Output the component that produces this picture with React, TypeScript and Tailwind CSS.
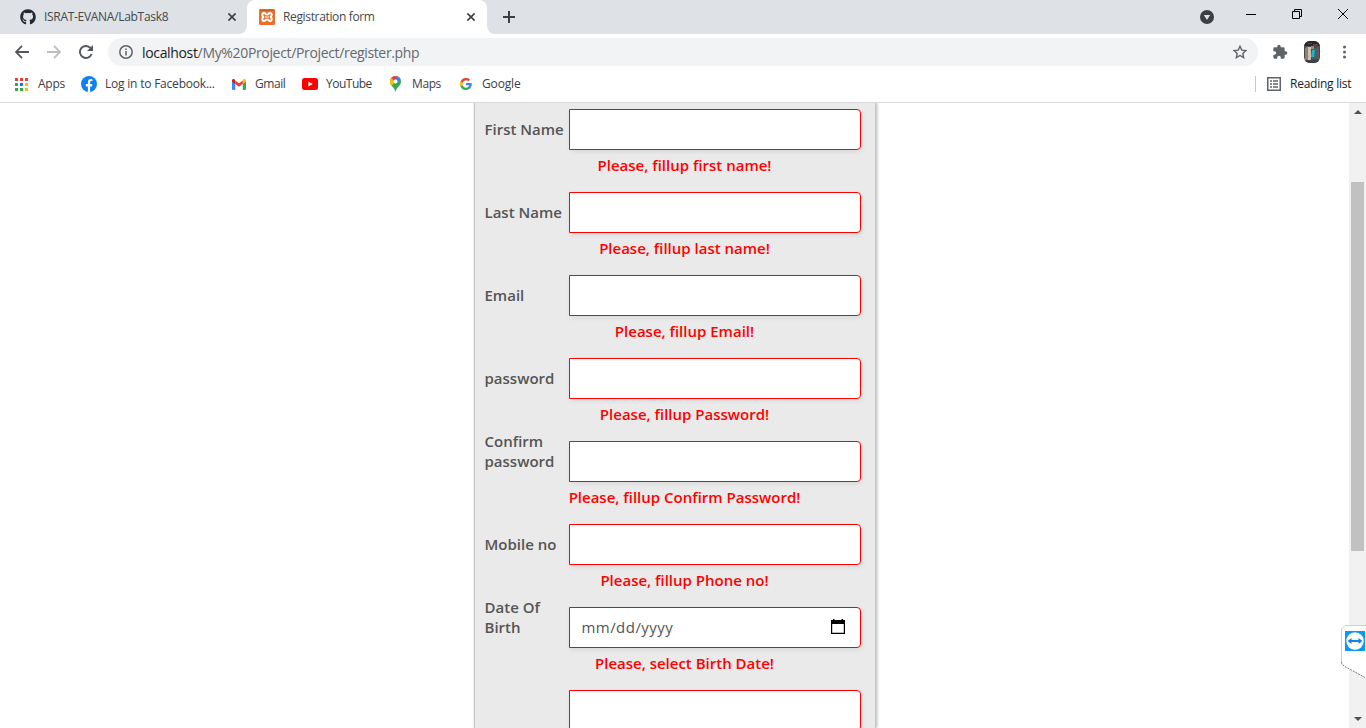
import React from 'react';
import { FaGithub } from 'react-icons/fa';

const ui = "font-['Open_Sans',sans-serif]";

const fields = [
  { label: 'First Name', error: 'Please, fillup first name!' },
  { label: 'Last Name', error: 'Please, fillup last name!' },
  { label: 'Email', error: 'Please, fillup Email!' },
  { label: 'password', error: 'Please, fillup Password!' },
  { label: 'Confirm password', error: 'Please, fillup Confirm Password!' },
  { label: 'Mobile no', error: 'Please, fillup Phone no!' },
  { label: 'Date Of Birth', error: 'Please, select Birth Date!', date: true },
  { label: '', error: '' },
];

function Close({ className = '' }: { className?: string }) {
  return (
    <svg className={className} width="8" height="8" viewBox="0 0 8 8" stroke="#3c4043" strokeWidth="1.6">
      <path d="M.4.4 7.6 7.6M7.6.4.4 7.6" />
    </svg>
  );
}

function TabStrip() {
  return (
    <div className="flex h-[34px] bg-[#dee1e6] text-[12px] text-[#45494d]">
      <div className="flex w-[247px] items-center pl-5">
        <FaGithub size={16} color="#24292f" />
        <span className="ml-2 w-[184px] whitespace-nowrap tracking-[-0.3px]">ISRAT-EVANA/LabTask8</span>
        <Close />
      </div>
      <div className="relative flex w-[240px] items-center rounded-t-[8px] bg-white pl-3">
        <svg className="absolute bottom-0 -left-2" width="8" height="8" viewBox="0 0 8 8" fill="#fff"><path d="M8 0v8H0a8 8 0 0 0 8-8" /></svg>
        <svg className="absolute -right-2 bottom-0" width="8" height="8" viewBox="0 0 8 8" fill="#fff"><path d="M0 0v8h8a8 8 0 0 1-8-8" /></svg>
        <svg width="16" height="16" viewBox="0 0 16 16">
          <rect width="16" height="16" rx="1.5" fill="#e8702a" />
          <path d="M.5 1.2h15" stroke="#c65a1c" />
          <path d="M5 4C3 4 2.700 6.600 4.300 8c-1.600 1.400-1.300 4 .7 4 1.700 0 1.400-1.600 3-1.600S9.300 12 11 12c2 0 2.300-2.600.7-4 1.600-1.400 1.300-4-.7-4-1.700 0-1.400 1.600-3 1.600S6.700 4 5 4z" fill="none" stroke="#fff" strokeWidth="2" strokeLinejoin="round" />
          <path d="M6 8h4" stroke="#fff" strokeWidth="1" />
        </svg>
        <span className="ml-2 w-[184px] whitespace-nowrap tracking-[-0.35px]">Registration form</span>
        <Close />
      </div>
      <svg className="mt-[11px] ml-4" width="12" height="12" viewBox="0 0 12 12" stroke="#3c4043" strokeWidth="2"><path d="M6 0v12M0 6h12" /></svg>
      <div className="ml-auto flex">
        <svg className="mt-[10px]" width="14" height="14" viewBox="0 0 14 14"><circle cx="7" cy="7" r="7" fill="#3c4043" /><path d="M3.800 5h6.400L7 10z" fill="#dee1e6" /></svg>
        <svg className="mt-[14px] ml-8" width="10" height="1" viewBox="0 0 10 1"><path d="M0 0h10v1H0z" /></svg>
        <svg className="mt-[9px] ml-9" width="10" height="10" viewBox="0 0 10 10" fill="none" stroke="#000"><path d="M.5 2.500h7v7h-7zM2.500 2.500v-2h7v7h-2" /></svg>
        <svg className="mt-[9px] mr-[18px] ml-9" width="10" height="10" viewBox="0 0 10 10" stroke="#000"><path d="m0 0 10 10M10 0 0 10" /></svg>
      </div>
    </div>
  );
}

function Toolbar() {
  return (
    <div className="flex h-[34px] items-center pt-[2px] pl-[15px]">
      <svg width="14" height="14" viewBox="0 0 14 14" fill="none" stroke="#54585c" strokeWidth="1.8"><path d="M14 7H1.300M7 .8.900 7 7 13.200" /></svg>
      <svg className="ml-[18px]" width="14" height="14" viewBox="0 0 14 14" fill="none" stroke="#bbbdc0" strokeWidth="1.8"><path d="M0 7h12.700M7 .8 13.100 7 7 13.200" /></svg>
      <svg className="ml-[18px]" width="14" height="14" viewBox="0 0 14 14" fill="none"><path d="M12.600 9A6 6 0 1 1 11.400 2.900L12.500 4" stroke="#54585c" strokeWidth="1.900" /><path d="M14 0v6H8z" fill="#54585c" /></svg>
      <div className="ml-[15px] flex h-7 w-[1150px] items-center rounded-full bg-[#f1f3f4] pr-[11px] pl-[11px]">
        <svg width="14" height="14" viewBox="0 0 14 14" fill="none" stroke="#5f6368" strokeWidth="1.500"><circle cx="7" cy="7" r="6.200" /><path d="M7 6v4.500M7 3.400V5" /></svg>
        <span className="ml-[9px] text-[14px] tracking-[-0.34px] text-[#66696d]"><span className="text-[#202124]">localhost</span>/My%20Project/Project/register.php</span>
        <svg className="ml-auto" width="14" height="14" viewBox="0 0 14 14" fill="none" stroke="#5f6368" strokeWidth="1.400"><path d="m7 1.300 1.750 3.800 4.150.48-3.080 2.840.82 4.100L7 10.450l-3.640 2.070.82-4.100L1.100 5.580l4.150-.48z" /></svg>
      </div>
      <svg className="ml-[14px]" width="16" height="16" viewBox="0 0 24 24" fill="#5f6368"><path d="M20.500 11H19V7a2 2 0 0 0-2-2h-4V3.500a2.500 2.500 0 0 0-5 0V5H4a2 2 0 0 0-2 2v3.800h1.500a2.700 2.700 0 0 1 0 5.400H2V20a2 2 0 0 0 2 2h3.800v-1.500a2.700 2.700 0 0 1 5.400 0V22H17a2 2 0 0 0 2-2v-4h1.500a2.500 2.500 0 0 0 0-5" /></svg>
      <svg className="ml-4 rounded-[6px]" width="16" height="22" viewBox="0 0 16 22">
        <rect width="16" height="22" fill="#4b4648" /><path d="M0 0h16v5H0z" fill="#2a242b" /><path d="M4 2h4v1H4zM9 3h5v2H9z" fill="#70384d" />
        <path d="M1 7l3-2v14H1z" fill="#8b8178" /><path d="M4 6h3v13H4z" fill="#d0c0ab" /><path d="M8 7h5v11H8z" fill="#45606a" /><path d="M8 9h3l-1 7H7z" fill="#1bb5c7" /><path d="M7 5h3v3H7z" fill="#a98372" /><path d="M13 6h2v12h-2z" fill="#65584d" /><path d="M0 19h16v3H0z" fill="#3b424c" />
      </svg>
      <svg className="ml-[23px]" width="4" height="14" viewBox="0 0 4 14" fill="#5f6368"><circle cx="1.500" cy="2" r="1.500" /><circle cx="1.500" cy="7" r="1.500" /><circle cx="1.500" cy="12" r="1.500" /></svg>
    </div>
  );
}

function Bookmarks() {
  return (
    <div className="flex h-[34px] items-center pb-[2px] pl-[15px] text-[12px] whitespace-nowrap text-[#3c4043]">
      <svg width="13" height="13" viewBox="0 0 13 13">
        <path d="M0 0h3v3H0zM5 0h3v3H5zM10 0h3v3h-3z" fill="#ea4335" /><path d="M0 5h3v3H0zM0 10h3v3H0zM5 10h3v3H5z" fill="#34a853" /><path d="M5 5h3v3H5z" fill="#1a73e8" /><path d="M10 5h3v3h-3zM10 10h3v3h-3z" fill="#fbbc04" />
      </svg>
      <span className="ml-[10px] w-[27px] tracking-[-0.25px]">Apps</span>
      <svg className="ml-4" width="16" height="16" viewBox="0 0 16 16"><circle cx="8" cy="8" r="8" fill="#0d80f2" /><path d="M6.900 16v-5.500H4.800V8h2.100V6.300c0-2.200 1.200-3.200 3-3.200.8 0 1.500.1 1.500.1v1.900h-.9c-1.100 0-1.400.7-1.400 1.300V8h2.200l-.4 2.500H9.100V16z" fill="#fff" /></svg>
      <span className="ml-2 w-[110px] tracking-[-0.21px]">Log in to Facebook...</span>
      <svg className="ml-[17px]" width="14" height="11" viewBox="0 0 14 11">
        <path d="M0 2v8a1 1 0 0 0 1 1h2.200V4z" fill="#4285f4" /><path d="M14 2v8a1 1 0 0 1-1 1h-2.200V4z" fill="#34a853" /><path d="M10.800 1.400V5L14 2.700V1.500C14 .2 12.500-.5 11.500.3z" fill="#fbbc04" /><path d="M3.200 1.400V5L7 7.800 10.800 5V1.400L7 4.200z" fill="#ea4335" /><path d="M0 1.500v1.200L3.200 5V1.400L2.500.3C1.500-.5 0 .2 0 1.500" fill="#c5221f" />
      </svg>
      <span className="ml-[9px] w-[31px] tracking-[-0.45px]">Gmail</span>
      <svg className="ml-4" width="16" height="12" viewBox="0 0 16 12"><rect width="16" height="12" rx="2.500" fill="#f00" /><path d="m6.400 3.500 4.300 2.500-4.300 2.500z" fill="#fff" /></svg>
      <span className="ml-2 w-[46px] tracking-[-0.5px]">YouTube</span>
      <svg className="ml-[18px]" width="11" height="16" viewBox="0 0 11 16">
        <path d="M5.500 0A5.500 5.500 0 0 0 0 5.500c0 4.300 4.400 5.500 5.500 10.500C6.600 11 11 9.800 11 5.500A5.500 5.500 0 0 0 5.500 0" fill="#34a853" />
        <path d="M1.300 2 5.500 5.500l-4 4.500C.6 8.900 0 7.700 0 5.500 0 4 .5 2.900 1.300 2" fill="#fbbc04" /><path d="M1.300 2 4 4.200 7.300.3C4.700-.6 2.600.5 1.300 2" fill="#ea4335" /><path d="M7.300.3 4 4.200 7 7.100l3.500-4C9.900 1.700 8.700.7 7.300.3" fill="#4285f4" /><circle cx="5.500" cy="5.500" r="2" fill="#fff" />
      </svg>
      <span className="ml-[11px] w-[29px] tracking-[-0.4px]">Maps</span>
      <svg className="ml-[19px]" width="12" height="12" viewBox="0 0 24 24">
        <path d="M23.500 12.300c0-.9-.1-1.500-.2-2.300H12v4.500h6.500c-.3 1.500-1.200 2.700-2.500 3.600v3h4c2.200-2.100 3.500-5.100 3.500-8.800" fill="#4285f4" /><path d="M12 24c3.200 0 6-1.100 8-2.900l-4-3c-1 .7-2.300 1.200-4 1.200-3.100 0-5.700-2.100-6.700-4.900H1.200v3.100A12 12 0 0 0 12 24" fill="#34a853" /><path d="M5.300 14.400a7 7 0 0 1 0-4.700V6.600H1.200a12 12 0 0 0 0 10.900z" fill="#fbbc05" /><path d="M12 4.700c1.800 0 3.300.6 4.600 1.800L20 3A12 12 0 0 0 1.200 6.600l4.100 3.100A7.200 7.200 0 0 1 12 4.700" fill="#ea4335" />
      </svg>
      <span className="ml-[10px] tracking-[-0.15px]">Google</span>
      <span className="mr-[11px] ml-auto h-4 w-px bg-[#c6c9cd]" />
      <svg width="14" height="14" viewBox="0 0 14 14" fill="none" stroke="#5f6368"><path d="M.75.75h12.500v12.500H.75z" strokeWidth="1.500" /><path d="M3 4h2M6 4h5M3 7h2M6 7h5M3 10h2M6 10h5" strokeWidth="1.500" /></svg>
      <span className="mr-[14px] ml-[9px] w-[62px] tracking-[-0.25px] text-[#202124]">Reading list</span>
    </div>
  );
}

function Field({ label, error, date }: { label: string; error: string; date?: boolean }) {
  return (
    <div className="h-[83px] shrink-0 pl-[10px]">
      <div className="flex h-[41px]">
        <label className="flex h-[30px] w-[84px] items-end text-[15px] leading-5 font-semibold text-[#555]">
          <span className="-mt-[10px] block">{label}</span>
        </label>
        <div className="flex w-[292px] items-center justify-between rounded-r-[4px] border border-[#ff0000] bg-white pr-[14px] pl-3 text-[15px] text-[#555] shadow-[1px_2px_5px_rgba(0,0,0,0.07)]">
          {date && (
            <>
              <span className="tracking-[0.45px]">mm/dd/yyyy</span>
              <svg className="-mt-px" width="16" height="16" viewBox="0 0 16 16"><path d="M3 0h1.500v1h7V0H13v1h2v14H1V1h2zM2.200 5v8.800h11.600V5z" /></svg>
            </>
          )}
        </div>
      </div>
      <p className="ml-[84px] w-[232px] pt-[5px] text-center text-[15px] leading-5 font-semibold whitespace-nowrap text-[#ff0000]">{error}</p>
    </div>
  );
}

function Scrollbar() {
  return (
    <div className="flex w-[17px] flex-col items-center bg-[#f1f1f1]">
      <svg className="mt-[7px] shrink-0" width="8" height="4" viewBox="0 0 8 4"><path d="M0 4h8L4 0z" fill="#505050" /></svg>
      <div className="mt-[68px] h-[369px] w-[13px] bg-[#c1c1c1]" />
      <svg className="mt-auto mb-[7px]" width="8" height="4" viewBox="0 0 8 4"><path d="M0 0h8L4 4z" fill="#505050" /></svg>
    </div>
  );
}

export default function App() {
  return (
    <div className={`relative flex h-[728px] w-[1366px] flex-col overflow-hidden bg-white ${ui}`}>
      <TabStrip />
      <Toolbar />
      <Bookmarks />
      <div className="h-px shrink-0 bg-[#d9dadc]" />
      <div className="flex min-h-0 flex-1">
        <main className="flex flex-1 justify-center overflow-hidden">
          <form className="flex w-[402px] shrink-0 flex-col border-x border-[#c6c6c6] bg-[#eaeaea] pt-[6px] shadow-[1px_0_3px_rgba(0,0,0,0.3)]">
            {fields.map((f, i) => <Field key={i} {...f} />)}
          </form>
        </main>
        <Scrollbar />
      </div>
      <svg className="absolute top-[625px] right-0" width="25" height="53" viewBox="0 0 25 53">
        <path d="M25 .5H4L.5 4v34l2.500 3 22 12z" fill="#fff" /><path d="M25 .5H4L.5 4v34" fill="none" stroke="#c9ced3" /><path d="M.5 37v1l2.500 3 22 12" fill="none" stroke="#777" strokeDasharray="2 1" />
        <path d="M4 6h20v20H4z" fill="#0b98f8" /><circle cx="14" cy="16" r="8.700" fill="#fff" /><path d="m6.500 16 4-3v2h7v-2l4 3-4 3v-2h-7v2z" fill="#1683e4" />
      </svg>
    </div>
  );
}
